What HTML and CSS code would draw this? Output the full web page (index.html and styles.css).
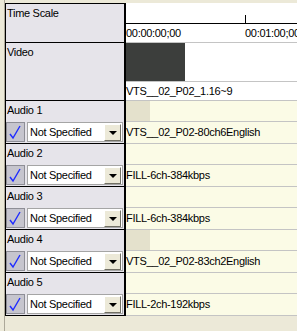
FILE: index.html
```html
<!DOCTYPE html>
<html lang="en">
<head>
    <meta charset="UTF-8">
    <title>Timeline</title>
    <link rel="stylesheet" href="styles.css">
</head>
<body>
    <div class="window">
        <div class="names">
            <div class="name-row time-name">Time Scale</div>
            <div class="name-row video-name">Video</div>

            <div class="audio-name">
                <div class="audio-label">Audio 1</div>
                <div class="audio-controls">
                    <span class="check"><svg width="17" height="18" viewBox="0 0 17 18"><polyline points="3,11 6,15 13,3" fill="none" stroke="#1f2cff" stroke-width="1.4"/></svg></span>
                    <span class="combo"><span class="combo-text">Not Specified</span><span class="combo-btn"></span></span>
                </div>
            </div>
            <div class="audio-name">
                <div class="audio-label">Audio 2</div>
                <div class="audio-controls">
                    <span class="check"><svg width="17" height="18" viewBox="0 0 17 18"><polyline points="3,11 6,15 13,3" fill="none" stroke="#1f2cff" stroke-width="1.4"/></svg></span>
                    <span class="combo"><span class="combo-text">Not Specified</span><span class="combo-btn"></span></span>
                </div>
            </div>
            <div class="audio-name">
                <div class="audio-label">Audio 3</div>
                <div class="audio-controls">
                    <span class="check"><svg width="17" height="18" viewBox="0 0 17 18"><polyline points="3,11 6,15 13,3" fill="none" stroke="#1f2cff" stroke-width="1.4"/></svg></span>
                    <span class="combo"><span class="combo-text">Not Specified</span><span class="combo-btn"></span></span>
                </div>
            </div>
            <div class="audio-name">
                <div class="audio-label">Audio 4</div>
                <div class="audio-controls">
                    <span class="check"><svg width="17" height="18" viewBox="0 0 17 18"><polyline points="3,11 6,15 13,3" fill="none" stroke="#1f2cff" stroke-width="1.4"/></svg></span>
                    <span class="combo"><span class="combo-text">Not Specified</span><span class="combo-btn"></span></span>
                </div>
            </div>
            <div class="audio-name">
                <div class="audio-label">Audio 5</div>
                <div class="audio-controls">
                    <span class="check"><svg width="17" height="18" viewBox="0 0 17 18"><polyline points="3,11 6,15 13,3" fill="none" stroke="#1f2cff" stroke-width="1.4"/></svg></span>
                    <span class="combo"><span class="combo-text">Not Specified</span><span class="combo-btn"></span></span>
                </div>
            </div>
        </div>

        <div class="tracks">
            <div class="ruler">
                <div class="ruler-line">
                    <span class="tick tick-1"></span>
                </div>
                <div class="ruler-labels">
                    <span class="time">00:00:00;00</span>
                    <span class="time">00:01:00;00</span>
                </div>
            </div>
            <div class="video-clip"><span class="clip-block"></span></div>
            <div class="track-row video-title">VTS__02_P02_1.16~9</div>

            <div class="track-head"><span class="marker"></span></div>
            <div class="track-row audio-track">VTS__02_P02-80ch6English</div>
            <div class="track-head"></div>
            <div class="track-row audio-track">FILL-6ch-384kbps</div>
            <div class="track-head"></div>
            <div class="track-row audio-track">FILL-6ch-384kbps</div>
            <div class="track-head"><span class="marker"></span></div>
            <div class="track-row audio-track">VTS__02_P02-83ch2English</div>
            <div class="track-head"></div>
            <div class="track-row audio-track">FILL-2ch-192kbps</div>
        </div>
    </div>
</body>
</html>
```

FILE: styles.css
```css
body {
    margin: 0;
    width: 297px;
    height: 331px;
    overflow: hidden;
    background-color: #ece9d8;
    font-family: "Liberation Sans", Arial, sans-serif;
    font-size: 11px;
    letter-spacing: -0.3px;
    color: #000;
}
.window {
    display: flex;
    align-items: flex-start;
    margin-left: 4px;
    padding-top: 3px;
    border-left: 1px solid #aca899;
    height: 328px;
}
.names {
    width: 118px;
    flex: none;
    background-color: #e6e4ea;
    border-top: 1px solid #000;
    border-left: 1px solid #000;
    border-right: 2px solid #000;
}
.name-row {
    box-sizing: border-box;
    padding: 3px 0 0 1px;
    line-height: 13px;
    border-bottom: 1px solid #000;
}
.time-name {
    height: 39px;
}
.video-name {
    height: 58px;
}
.audio-name {
    height: 43px;
    box-sizing: border-box;
    border-bottom: 1px solid #000;
}
.audio-label {
    height: 20px;
    padding: 3px 0 0 1px;
    box-sizing: border-box;
    line-height: 13px;
}
.audio-controls {
    display: flex;
    align-items: center;
    gap: 2px;
    height: 22px;
}
.check {
    width: 17px;
    height: 18px;
    border: 1px solid #8e8e96;
    background-color: #c6c5ce;
}
.check svg {
    display: block;
}
.combo {
    display: flex;
    align-items: center;
    justify-content: space-between;
    width: 96px;
    height: 20px;
    box-sizing: border-box;
    border: 1px solid #a5a5a5;
    background-color: #fff;
    padding: 1px 1px 1px 2px;
}
.combo-btn {
    position: relative;
    width: 15px;
    height: 15px;
    background-color: #ece9d8;
    border: 1px solid;
    border-color: #fff #716f64 #716f64 #fff;
}
.combo-btn::after {
    content: "";
    position: absolute;
    left: 4px;
    top: 6px;
    border-left: 4px solid transparent;
    border-right: 4px solid transparent;
    border-top: 4px solid #000;
}
.tracks {
    flex: 1;
    overflow: hidden;
    white-space: nowrap;
}
.ruler {
    height: 39px;
    background-color: #fff;
    border-bottom: 1px solid #c4c4c4;
}
.ruler-line {
    position: relative;
    height: 20px;
    border-bottom: 1px solid #000;
}
.tick {
    position: absolute;
    bottom: 0;
    width: 1px;
    height: 8px;
    background-color: #000;
}
.tick-1 {
    left: 119px;
}
.ruler-labels {
    display: grid;
    grid-template-columns: 119px auto;
    padding-top: 3px;
    line-height: 13px;
}
.video-clip {
    height: 38px;
    background-color: #fff;
    border-bottom: 1px solid #c4c4c4;
}
.clip-block {
    display: block;
    width: 59px;
    height: 38px;
    background-color: #3c3e3c;
}
.track-row {
    padding-left: 0;
    border-bottom: 1px solid #c4c4c4;
}
.video-title {
    height: 18px;
    line-height: 18px;
    background-color: #fff;
}
.track-head {
    height: 20px;
    background-color: #fbfbe6;
    border-bottom: 1px solid #c4c4c4;
}
.marker {
    display: block;
    width: 24px;
    height: 20px;
    background-color: #e4e1cc;
}
.audio-track {
    height: 21px;
    line-height: 21px;
    background-color: #fbfbe6;
}
```
